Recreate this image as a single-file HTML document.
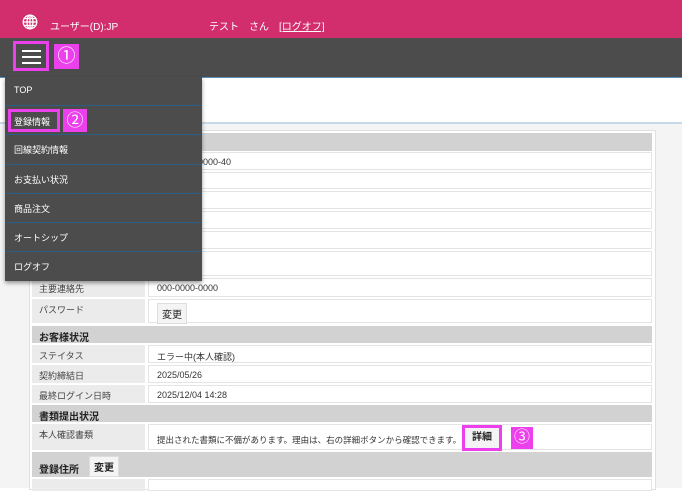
<!DOCTYPE html>
<html><head><meta charset="utf-8"><style>
*{margin:0;padding:0;box-sizing:border-box}
body{width:682px;height:488px;overflow:hidden;background:#fff;font-family:"Liberation Sans","Noto Sans CJK JP",sans-serif;font-size:9px;color:#333;position:relative}
.a{position:absolute}
.top{left:0;top:0;width:682px;height:38px;background:#d22d6c;color:#fff}
.bar{left:0;top:38px;width:682px;height:39px;background:#4c4c4c}
.gray{left:0;top:124px;width:682px;height:364px;background:#f4f4f4}
.tbl{left:29px;top:130px;width:627px;height:360px;background:#fff;border:1px solid #e0e0e0}
.l{background:#ebebeb;left:32px;width:113px;padding:4px 0 0 7px;color:#444}
.v{background:#fff;left:148px;width:504px;padding:4px 0 0 8px;border:1px solid #e4e4e4;color:#333}
.h{background:#d2d2d2;left:32px;width:620px;padding:3px 0 0 7px;font-weight:bold;font-size:10px;color:#222}
.btn{display:inline-block;background:#f4f4f4;border:1px solid #ddd;padding:2px 4px;font-size:10px;color:#222}
.menu{left:5px;top:77px;width:197px;height:204px;background:#4c4c4c;box-shadow:0 2px 4px rgba(0,0,0,.4)}
.mi{position:absolute;left:0;width:197px;height:29px;color:#fff;padding:8px 0 0 9px;font-size:9px}
.ln{position:absolute;left:0;width:197px;height:1px;background:#2d5f86}
.pk{position:absolute;background:#ec40ec;color:#fff}
</style></head><body>
<div class="a top">
<svg class="a" style="left:22px;top:14px" width="16" height="16" viewBox="0 0 16 16" fill="none" stroke="#fff" stroke-width="1.3"><circle cx="8" cy="8" r="6.8"/><ellipse cx="8" cy="8" rx="3" ry="6.8"/><line x1="1" y1="8" x2="15" y2="8"/><line x1="2" y1="4.5" x2="14" y2="4.5"/><line x1="2" y1="11.5" x2="14" y2="11.5"/><line x1="8" y1="1" x2="8" y2="15"/></svg>
<div class="a" style="left:50px;top:18px;font-size:10px">ユーザー(D):JP</div>
<div class="a" style="left:209px;top:18px;font-size:10px">テスト　さん　<span style="text-decoration:underline">[ログオフ]</span></div>
</div>
<div class="a bar">
<div class="pk" style="left:13px;top:3px;width:36px;height:30px"><div style="position:absolute;left:3px;top:3px;width:30px;height:24px;background:#4c4c4c"></div>
<div style="position:absolute;left:9px;top:9px;width:19px;height:2px;background:#fff"></div>
<div style="position:absolute;left:9px;top:15px;width:19px;height:2px;background:#fff"></div>
<div style="position:absolute;left:9px;top:21px;width:19px;height:2px;background:#fff"></div></div>
<div class="pk" style="left:54px;top:6px;width:25px;height:25px;font-size:18px;line-height:25px;text-align:center">①</div>
</div>
<div class="a" style="left:0;top:77px;width:682px;height:1px;background:#5a8fb8"></div>
<div class="a gray"></div>
<div class="a" style="left:0;top:122px;width:682px;height:2px;background:#c8d8e6"></div>
<div class="a tbl"></div>
<div class="a h" style="top:133px;height:18px"></div>
<div class="a l" style="top:152px;height:18px"></div><div class="a v" style="top:152px;height:18px">000-0000-0000-40</div>
<div class="a l" style="top:172px;height:17px"></div><div class="a v" style="top:172px;height:17px">テスト</div>
<div class="a l" style="top:191px;height:18px"></div><div class="a v" style="top:191px;height:18px">テスト</div>
<div class="a l" style="top:211px;height:18px"></div><div class="a v" style="top:211px;height:18px">0001</div>
<div class="a l" style="top:231px;height:18px"></div><div class="a v" style="top:231px;height:18px"></div>
<div class="a l" style="top:251px;height:25px"></div><div class="a v" style="top:251px;height:25px"></div>
<div class="a l" style="top:278px;height:19px">主要連絡先</div><div class="a v" style="top:278px;height:19px">000-0000-0000</div>
<div class="a l" style="top:299px;height:24px">パスワード</div><div class="a v" style="top:299px;height:24px;padding-top:3px"><span class="btn">変更</span></div>
<div class="a h" style="top:326px;height:17px">お客様状況</div>
<div class="a l" style="top:345px;height:18px">ステイタス</div><div class="a v" style="top:345px;height:18px">エラー中(本人確認)</div>
<div class="a l" style="top:365px;height:18px">契約締結日</div><div class="a v" style="top:365px;height:18px">2025/05/26</div>
<div class="a l" style="top:385px;height:18px">最終ログイン日時</div><div class="a v" style="top:385px;height:18px">2025/12/04 14:28</div>
<div class="a h" style="top:405px;height:17px">書類提出状況</div>
<div class="a l" style="top:424px;height:26px">本人確認書類</div><div class="a v" style="top:424px;height:26px;padding-top:9px;font-size:8.5px">提出された書類に不備があります。理由は、右の詳細ボタンから確認できます。</div>
<div class="pk" style="left:462px;top:425px;width:40px;height:26px"><div style="position:absolute;left:3px;top:3px;width:34px;height:20px;background:#f4f4f4;color:#222;font-size:10px;font-weight:bold;text-align:center;line-height:20px">詳細</div></div>
<div class="pk" style="left:511px;top:427px;width:22px;height:22px;font-size:16px;line-height:22px;text-align:center">③</div>
<div class="a h" style="top:452px;height:25px;padding-top:6px">登録住所　<span class="btn" style="font-weight:bold;position:relative;top:-2px">変更</span></div>
<div class="a l" style="top:479px;height:12px"></div><div class="a v" style="top:479px;height:12px"></div>
<div class="a menu">
<div class="mi" style="top:0">TOP</div>
<div class="mi" style="top:29px"><span class="pk" style="left:3px;top:3px;width:52px;height:23px"><span style="position:absolute;left:3px;top:3px;width:46px;height:17px;background:#4c4c4c;padding:3px 0 0 3px;font-size:9px">登録情報</span></span><span class="pk" style="left:58px;top:3px;width:24px;height:23px;font-size:17px;line-height:23px;text-align:center">②</span></div>
<div class="mi" style="top:58px">回線契約情報</div>
<div class="mi" style="top:88px">お支払い状況</div>
<div class="mi" style="top:117px">商品注文</div>
<div class="mi" style="top:146px">オートシップ</div>
<div class="mi" style="top:175px">ログオフ</div>
<div class="ln" style="top:28px"></div>
<div class="ln" style="top:57px"></div>
<div class="ln" style="top:87px"></div>
<div class="ln" style="top:116px"></div>
<div class="ln" style="top:145px"></div>
<div class="ln" style="top:174px"></div>
</div>
</body></html>
